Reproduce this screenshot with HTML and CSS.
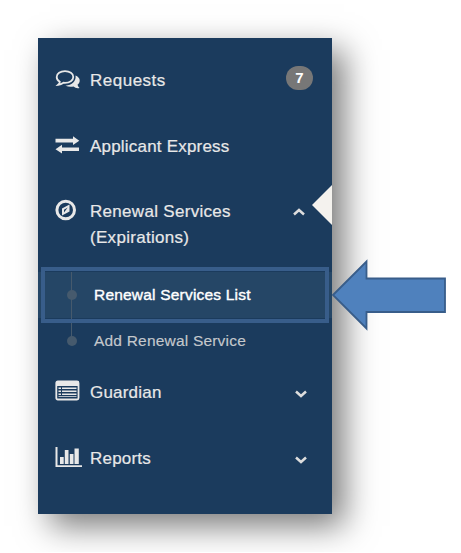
FILE: index.html
```html
<!DOCTYPE html>
<html lang="en">
<head>
<meta charset="utf-8">
<title>Navigation</title>
<link rel="stylesheet" href="styles.css">
</head>
<body>
<nav class="sidebar">
  <a class="item requests">
    <svg class="icon" width="28" height="24" viewBox="0 0 28 24"><path d="M20.500 6.500C25.500 8.500 26 13 22.500 15.800Q23 17.500 24.500 19Q21 19.800 18.500 17.500Q14.500 18.500 10.500 16.800C17 16 21.500 12 20.500 6.500Z" fill="#e8e8e8"/><path d="M10 2.200C14.700 2.200 18.300 4.700 18.300 8S14.700 13.800 10 13.800L8.500 13.700Q6 15.500 3.200 15.800Q4.700 14.500 4.800 12.700C2.900 11.700 1.700 10 1.700 8C1.700 4.700 5.300 2.200 10 2.200Z" fill="#1b3b5d" stroke="#e8e8e8" stroke-width="1.800"/></svg>
    <span class="label wide">Requests</span>
    <span class="badge">7</span>
  </a>
  <a class="item express">
    <svg class="icon" width="28" height="24" viewBox="0 0 28 24"><path d="M.5 4.800H18V2.200L24.300 6.700L18 11V8.400H.5ZM24 13.400H7V10.800L.5 15.200L7 19.500V17H24Z" fill="#e8e8e8"/></svg>
    <span class="label">Applicant Express</span>
  </a>
  <a class="item renewal">
    <svg class="icon" width="28" height="24" viewBox="0 0 28 24"><circle cx="10.700" cy="11" r="8.800" fill="none" stroke="#e8e8e8" stroke-width="3"/><path d="M14.500 5.500V12.500L7 16.500V9.500ZM12.700 8.500L9 10.700V13.500Z" fill="#e8e8e8" fill-rule="evenodd"/></svg>
    <span class="label renewal-label">Renewal Services<br>(Expirations)</span>
    <svg class="chevron" width="12" height="8" viewBox="0 0 12 8"><path d="M1 6.500L6 2L11 6.500" fill="none" stroke="#ddd" stroke-width="2.500"/></svg>
    <span class="notch"></span>
  </a>
  <div class="submenu">
    <a class="sub active"><span class="dot"></span><span class="sublabel">Renewal Services List</span></a>
    <a class="sub"><span class="dot"></span><span class="sublabel add">Add Renewal Service</span></a>
  </div>
  <a class="item guardian">
    <svg class="icon" width="28" height="24" viewBox="0 0 28 24"><rect x="1.300" y="1.500" width="22.200" height="18" rx="1.500" fill="none" stroke="#e8e8e8" stroke-width="1.800"/><path d="M1 1.500H24V6H1ZM3.500 7.500H6V9H3.500ZM7 7.500H21.500V9H7ZM3.500 10.500H6V12H3.500ZM7 10.500H21.500V12H7ZM3.500 13.500H6V15H3.500ZM7 13.500H21.500V15H7ZM3.500 16.200H21.500V17H3.500Z" fill="#e8e8e8"/></svg>
    <span class="label">Guardian</span>
    <svg class="chevron" width="12" height="8" viewBox="0 0 12 8"><path d="M1 1.500L6 6L11 1.500" fill="none" stroke="#ddd" stroke-width="2.500"/></svg>
  </a>
  <a class="item reports">
    <svg class="icon" width="28" height="24" viewBox="0 0 28 24"><path d="M.5 1H2.500V19.300H27V21H.5ZM5 11H8.700V18H5ZM9.800 4H13.500V18H9.800ZM14.800 8H18.500V18H14.800ZM19.500 2.500H23.800V18H19.500Z" fill="#e8e8e8"/></svg>
    <span class="label">Reports</span>
    <svg class="chevron" width="12" height="8" viewBox="0 0 12 8"><path d="M1 1.500L6 6L11 1.500" fill="none" stroke="#ddd" stroke-width="2.500"/></svg>
  </a>
</nav>
<div class="outline"></div>
<svg class="arrow" width="116" height="72" viewBox="0 0 116 72"><path d="M2 36L35.500 2.500V19.500H114V53H35.500V69.500Z" fill="#4f81bd" stroke="#385d8a" stroke-width="1.800"/></svg>
</body>
</html>
```
FILE: styles.css
```css
body {
  margin: 0;
  padding: 38px;
  background: #fff;
  overflow: hidden;
  font-family: "Liberation Sans", Arial, sans-serif;
}
.sidebar {
  position: relative;
  box-sizing: border-box;
  width: 294px;
  height: 476px;
  padding-top: 9px;
  background: #1b3b5d;
  box-shadow: 12px 12px 31px rgba(0, 0, 0, .53);
  color: #e8e8e8;
}
.item {
  position: relative;
  box-sizing: border-box;
  display: flex;
  align-items: flex-start;
  height: 66px;
  padding: 21px 0 0 17px;
}
.icon { flex: none; width: 28px; height: 24px; }
.requests .icon { margin-top: 1px; }
.label {
  margin: 0 0 0 7px;
  font-size: 17px;
  line-height: 26px;
  white-space: nowrap;
  letter-spacing: .2px;
  -webkit-text-stroke: .2px;
}
.wide { letter-spacing: .5px; }
.badge {
  margin: -2px 19px 0 auto;
  width: 27px;
  height: 24px;
  border-radius: 12px;
  background: #777;
  color: #fff;
  font-size: 15px;
  font-weight: bold;
  line-height: 24px;
  text-align: center;
}
.renewal { height: 94px; }
.renewal .icon { margin-top: -1px; }
.renewal-label { margin-top: -1px; letter-spacing: .3px; }
.chevron { margin: 10px 25px 0 auto; }
.renewal .chevron { margin: 8px 27px 0 auto; }
.notch {
  position: absolute;
  right: 0;
  top: 6px;
  width: 20px;
  height: 40px;
  background: #f4f2ee;
  clip-path: polygon(0 50%, 100% 0, 100% 100%);
}
.submenu { height: 92px; margin-top: -1px; }
.sub {
  position: relative;
  display: flex;
  align-items: center;
  height: 46px;
  padding-left: 29px;
  color: #c4c8cc;
}
.sub.active { background: #254666; color: #fff; }
.dot {
  flex: none;
  width: 10px;
  height: 10px;
  border-radius: 50%;
  background: #465a6d;
}
.sub::before {
  content: "";
  position: absolute;
  left: 33px;
  top: 0;
  width: 1px;
  height: 46px;
  background: #465a6d;
}
.sub:last-child::before { height: 23px; }
.sublabel {
  margin-left: 17px;
  font-size: 15.500px;
  line-height: 24px;
  white-space: nowrap;
  letter-spacing: .2px;
  -webkit-text-stroke: .4px;
}
.add { -webkit-text-stroke: .15px; }
.guardian { margin-top: -5px; }
.outline {
  position: absolute;
  box-sizing: border-box;
  left: 41px;
  top: 267px;
  width: 288px;
  height: 56px;
  border: 4px solid #385d8a;
}
.arrow {
  position: absolute;
  left: 331px;
  top: 259px;
}
```
